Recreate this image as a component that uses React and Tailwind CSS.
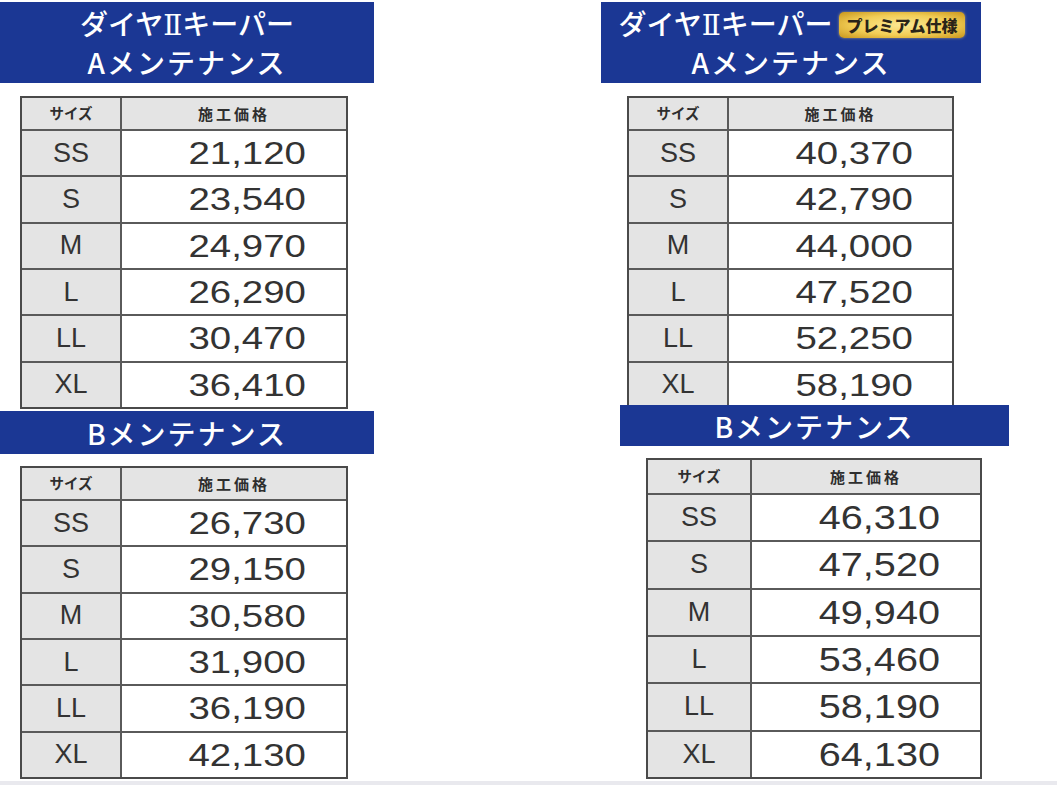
import React from "react";

const A_LEFT = [
  ["SS", "21,120"],
  ["S", "23,540"],
  ["M", "24,970"],
  ["L", "26,290"],
  ["LL", "30,470"],
  ["XL", "36,410"],
];
const B_LEFT = [
  ["SS", "26,730"],
  ["S", "29,150"],
  ["M", "30,580"],
  ["L", "31,900"],
  ["LL", "36,190"],
  ["XL", "42,130"],
];
const A_RIGHT = [
  ["SS", "40,370"],
  ["S", "42,790"],
  ["M", "44,000"],
  ["L", "47,520"],
  ["LL", "52,250"],
  ["XL", "58,190"],
];
const B_RIGHT = [
  ["SS", "46,310"],
  ["S", "47,520"],
  ["M", "49,940"],
  ["L", "53,460"],
  ["LL", "58,190"],
  ["XL", "64,130"],
];

function PriceTable({ rows, outer, headH, leftW, numCls }) {
  return (
    <div className={`flex flex-col border-2 border-[#4a4a4a] bg-white ${outer}`}>
      <div className={`flex shrink-0 border-b-2 border-[#5a5a5a] bg-[#e4e4e4] ${headH}`}>
        <div className={`flex items-center justify-center border-r-2 border-[#5a5a5a] font-['Noto_Sans_CJK_JP',sans-serif] text-[14.5px] font-bold leading-none text-[#2e2e2e] ${leftW}`}>
          サイズ
        </div>
        <div className="flex flex-1 items-center justify-center font-['Noto_Sans_CJK_JP',sans-serif] text-[15px] font-bold leading-none tracking-[3px] text-[#2e2e2e]">
          施工価格
        </div>
      </div>
      {rows.map(([size, price], i) => (
        <div
          key={size}
          className={`flex min-h-0 flex-1 basis-0 ${i < rows.length - 1 ? "border-b-2 border-[#5a5a5a]" : ""}`}
        >
          <div className={`flex items-center justify-center border-r-2 border-[#5a5a5a] bg-[#e4e4e4] font-['Liberation_Sans',Arial,sans-serif] text-[27px] leading-none text-[#333] ${leftW}`}>
            {size}
          </div>
          <div className={`flex flex-1 items-center justify-end font-['Liberation_Sans',Arial,sans-serif] leading-none text-[#333] ${numCls}`}>
            <span className="inline-block origin-right scale-x-[1.2]">{price}</span>
          </div>
        </div>
      ))}
    </div>
  );
}

function Badge() {
  return (
    <span className="flex h-[26px] items-center rounded-[5px] bg-[radial-gradient(ellipse_at_center,#fbe893_0%,#f2cd55_55%,#c8951c_100%)] px-[8px] font-['Noto_Sans_CJK_JP',sans-serif] text-[16px] font-black leading-none text-[#2a2418] shadow-[0_0_3px_rgba(255,220,120,0.6)]">
      プレミアム仕様
    </span>
  );
}

function Roman2() {
  return <span className="font-['DejaVu_Serif',serif] font-normal">Ⅱ</span>;
}

export default function App() {
  return (
    <div className="flex h-[785px] w-[1057px] flex-col overflow-hidden bg-white">
      <div className="flex h-[781px]">
        {/* Left column */}
        <div className="flex w-[374px] flex-col pt-[2px]">
          <div className="flex h-[81px] flex-col items-center justify-center bg-[#1b3794] font-['Noto_Sans_CJK_JP',sans-serif] text-[28px] font-medium leading-[36px] text-white">
            <div>
              ダイヤ<Roman2 />キーパー
            </div>
            <div className="tracking-[2px]">Aメンテナンス</div>
          </div>
          <PriceTable
            rows={A_LEFT}
            outer="mt-[13px] ml-[20px] h-[313px] w-[328px]"
            headH="h-[33px]"
            leftW="w-[100px]"
            numCls="pr-[40px] text-[32px]"
          />
          <div className="mt-[2px] flex h-[43px] items-center justify-center bg-[#1b3794] font-['Noto_Sans_CJK_JP',sans-serif] text-[28px] font-medium leading-none tracking-[2px] text-white">
            Bメンテナンス
          </div>
          <PriceTable
            rows={B_LEFT}
            outer="mt-[12px] ml-[20px] h-[313px] w-[328px]"
            headH="h-[33px]"
            leftW="w-[100px]"
            numCls="pr-[40px] text-[32px]"
          />
        </div>

        {/* Right column */}
        <div className="ml-[227px] flex w-[408px] flex-col pt-[2px]">
          <div className="flex h-[81px] w-[380px] flex-col items-center justify-center bg-[#1b3794] font-['Noto_Sans_CJK_JP',sans-serif] text-[28px] font-medium leading-[36px] text-white">
            <div className="flex items-center gap-[6px] pl-[2px]">
              <span>
                ダイヤ<Roman2 />キーパー
              </span>
              <Badge />
            </div>
            <div className="tracking-[2px]">Aメンテナンス</div>
          </div>
          <div className="mt-[13px] ml-[26px] h-[309px] w-[327px] overflow-hidden">
            <PriceTable
              rows={A_RIGHT}
              outer="h-[313px] w-[327px]"
              headH="h-[33px]"
              leftW="w-[100px]"
              numCls="pr-[39px] text-[32px]"
            />
          </div>
          <div className="ml-[19px] flex h-[41px] w-[389px] items-center justify-center bg-[#1b3794] font-['Noto_Sans_CJK_JP',sans-serif] text-[28px] font-medium leading-none tracking-[2px] text-white">
            Bメンテナンス
          </div>
          <PriceTable
            rows={B_RIGHT}
            outer="mt-[12px] ml-[45px] h-[321px] w-[336px]"
            headH="h-[35px]"
            leftW="w-[104px]"
            numCls="pr-[40px] text-[33px]"
          />
        </div>
      </div>
      <div className="h-[4px] w-full bg-[#e9e9ee]" />
    </div>
  );
}
